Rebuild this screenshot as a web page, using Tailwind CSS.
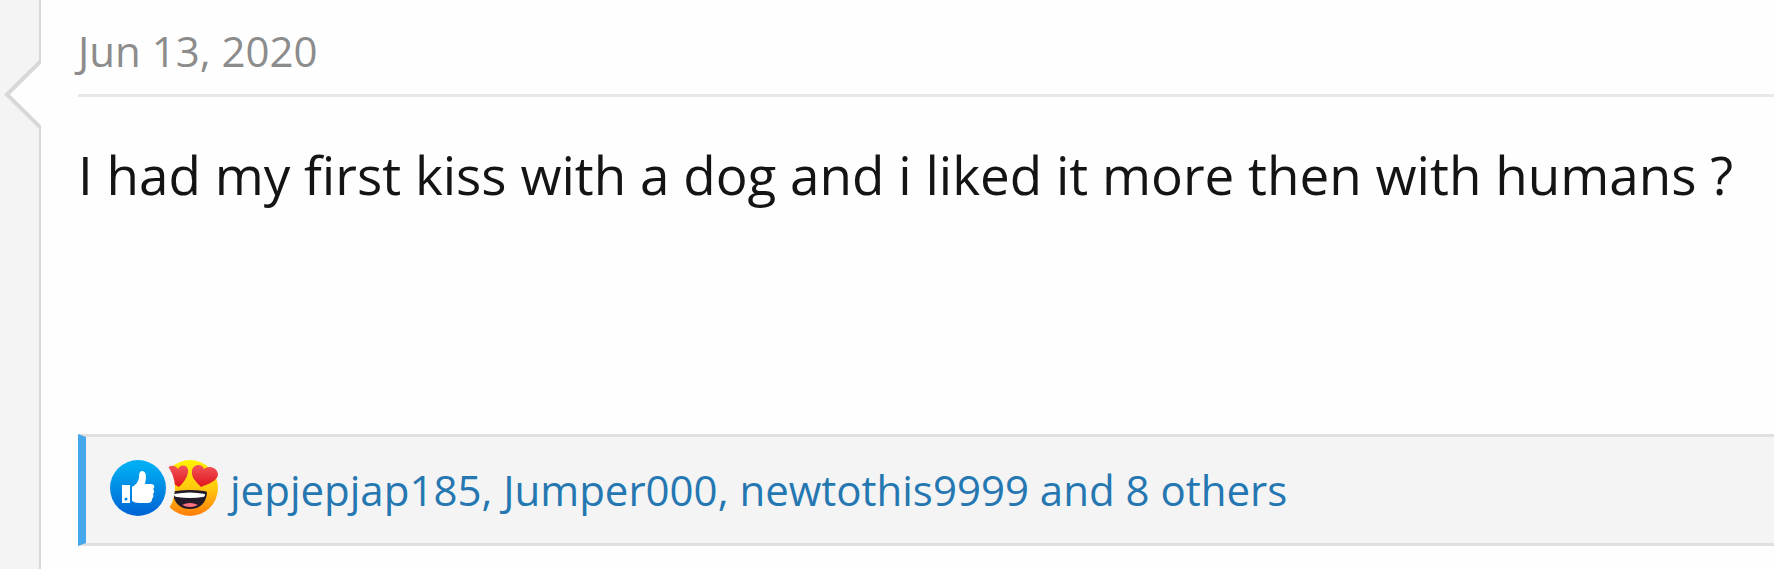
<!DOCTYPE html>
<html lang="en">
<head>
    <meta charset="UTF-8">
    <meta name="viewport" content="width=device-width, initial-scale=1.0">
    <title>Forum post</title>
    <script src="https://cdn.jsdelivr.net/npm/@tailwindcss/browser@4"></script>
</head>
<body class="flex min-h-screen bg-[#fefefe] font-['Segoe_UI','Open_Sans','Noto_Sans',sans-serif]">

    <!-- User column -->
    <aside class="relative w-[41px] shrink-0 border-r-2 border-[#d8d8d8] bg-[#f4f4f4]">
        <svg class="absolute top-[58px] left-[4px]" width="37" height="72" viewBox="0 0 37 72" fill="none">
            <path d="M37 3L3 36.500L37 70Z" fill="#fefefe" />
            <path d="M38 2L3 36.500L38 71" stroke="#d8d8d8" stroke-width="4" />
        </svg>
    </aside>

    <!-- Post -->
    <article class="min-w-0 flex-1 pl-[37px]">
        <header class="border-b-3 border-[#e8e8e8] pt-[21px] pb-[13px]">
            <a href="#" class="block text-[42px] leading-[60px] text-[#8c8c8c]"><time datetime="2020-06-13">Jun 13, 2020</time></a>
        </header>

        <p class="pt-[38px] text-[53px] leading-[80px] whitespace-nowrap text-[#141414]">I had my first kiss with a dog and i liked it more then with humans ?</p>

        <!-- Reactions -->
        <div class="mt-[219px] flex items-start border-y-3 border-l-8 border-y-[#dfdfdf] border-l-[#47a7eb] bg-[#f4f4f4] py-[23px] pl-[24px]">
            <svg class="shrink-0" width="108" height="56" viewBox="0 0 108 56">
                <defs>
                    <linearGradient id="blue" x1="0" y1="0" x2="0" y2="1">
                        <stop offset="0.1" stop-color="#00adf2" />
                        <stop offset="1" stop-color="#0062d4" />
                    </linearGradient>
                    <linearGradient id="yellow" x1="0" y1="0" x2="0" y2="1">
                        <stop offset="0" stop-color="#fff200" />
                        <stop offset="0.5" stop-color="#ffc90e" />
                        <stop offset="1" stop-color="#ff7b0a" />
                    </linearGradient>
                    <linearGradient id="red" x1="0" y1="0" x2="0" y2="1">
                        <stop offset="0" stop-color="#f2545b" />
                        <stop offset="1" stop-color="#e0151b" />
                    </linearGradient>
                    <mask id="cut">
                        <rect width="108" height="56" fill="white" />
                        <circle cx="28" cy="28" r="37" fill="black" />
                    </mask>
                </defs>
                <circle cx="28" cy="28" r="28" fill="url(#blue)" />
                <path d="M12 25h8v18h-8zM22 27c4-2 6-5 7-9 0-3 0-7 3-7 3 0 4 3 4 6 0 3-1 5-1 7h6c4 0 4 4 2 5 2 2 1 4 0 5 1 2 0 4-1 5 0 3-2 4-5 4h-8c-3 0-5-1-7-2z" fill="white" />
                <circle cx="16" cy="39" r="1.500" fill="#0081df" />
                <g mask="url(#cut)">
                    <circle cx="80" cy="28" r="28" fill="url(#yellow)" />
                    <path d="M69 27C62 23 55 18 57 10C58 5 65 4 68 9C71 3 79 5 78 12C77 19 72 24 69 27Z" fill="url(#red)" />
                    <path d="M91 27C86 22 81 17 82 11C83 4 92 3 94 9C98 5 107 7 108 14C108 21 98 24 91 27Z" fill="url(#red)" />
                    <path d="M63 33Q63 31 66 31Q80 29 94 31Q97 31 97 33C96 43 90 49 80 49C70 49 64 43 63 33Z" fill="#231a29" />
                    <path d="M64 34Q80 31 95 34Q95 37 93 37Q80 39 67 37Q64 37 64 34Z" fill="white" />
                    <path d="M72 45Q80 41 88 45Q80 49 72 45Z" fill="#ff717f" />
                </g>
            </svg>
            <a href="#" class="ml-[12px] text-[42px] leading-[60px] whitespace-nowrap text-[#2577b1]">jepjepjap185, Jumper000, newtothis9999 and 8 others</a>
        </div>
    </article>

</body>
</html>
